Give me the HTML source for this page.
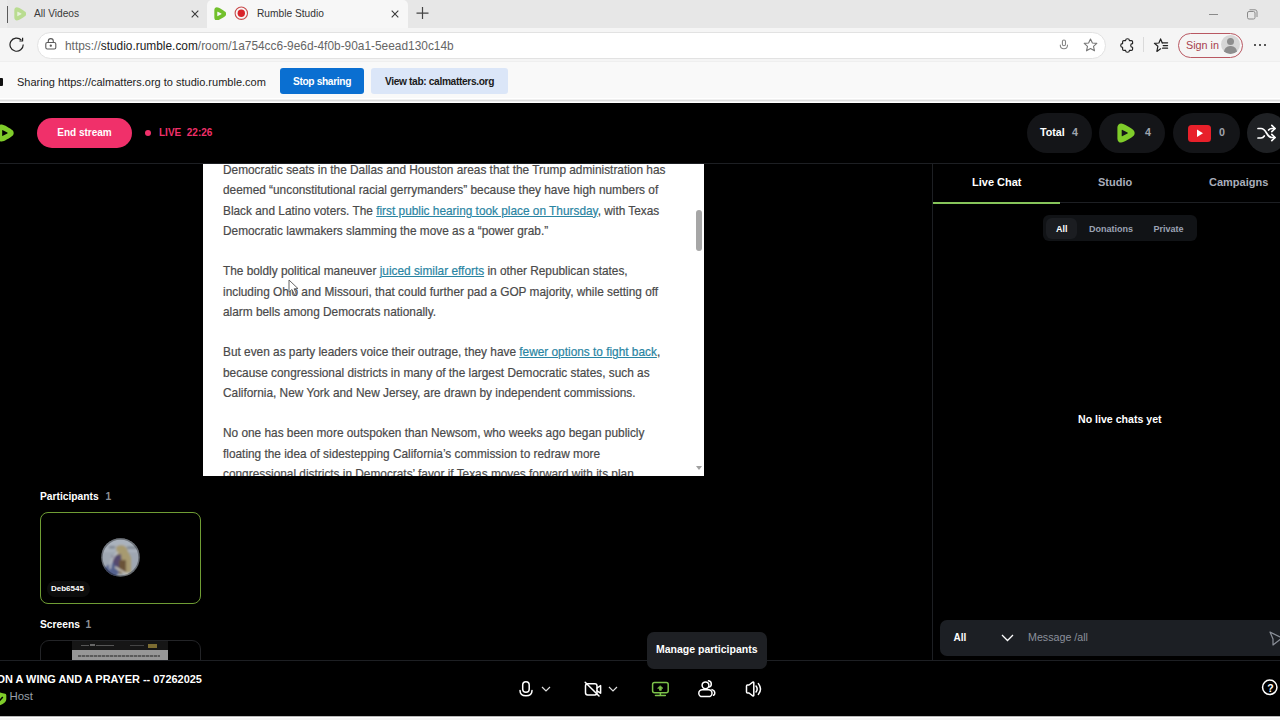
<!DOCTYPE html>
<html><head><meta charset="utf-8">
<style>
*{margin:0;padding:0;box-sizing:border-box}
html,body{width:1280px;height:720px;overflow:hidden;background:#000;font-family:"Liberation Sans",sans-serif}
.abs{position:absolute}
#tabs{position:absolute;left:0;top:0;width:1280px;height:28px;background:#e7e7e7}
#toolbar{position:absolute;left:0;top:28px;width:1280px;height:34px;background:#f5f5f5}
#share{position:absolute;left:0;top:61px;width:1280px;height:42px;background:linear-gradient(#efefef 0 1px,#f9f9f9 1px 37px,#fff 37px 38px,#f0f0f0 38px 39px,#dcdcdc 39px 40px,#f0f0f0 40px 41px,#fff 41px)}
#sep1{display:none}
#app{position:absolute;left:0;top:103px;width:1280px;height:613px;background:#000;overflow:hidden}
#bottomframe{position:absolute;left:0;top:716px;width:1280px;height:4px;background:#f0f0f0}
.t{position:absolute;white-space:nowrap}
</style></head><body>
<!-- tabs -->
<div id="tabs">
  <div class="abs" style="left:0;top:0;width:7px;height:28px;background:#ebebeb"></div>
  <div class="abs" style="left:7px;top:6px;width:1.3px;height:17px;background:#5a5a5a"></div>
  <svg class="abs" style="left:13.5px;top:6.8px" width="12.5" height="13.8" viewBox="0 0 18 20"><path d="M4.2 0.4 C1.8 0.4 0.4 2 0.4 4.6 L0.4 15.4 C0.4 18 1.8 19.6 4.2 19.6 C6.8 19.6 13.8 15.2 16.3 13.1 C18.1 11.6 18.1 8.4 16.3 6.9 C13.8 4.8 6.8 0.4 4.2 0.4 Z" fill="#b9dc90"/><path d="M5.5 6.9 Q4.7 6.4 4.7 7.3 L4.7 12.7 Q4.7 13.6 5.5 13.1 L10.5 10.5 Q11.3 10 10.5 9.5 Z" fill="#e6f1da"/></svg>
  <div class="t" style="left:34px;top:8px;font-size:10.2px;color:#3a3a3a">All Videos</div>
  <svg class="abs" style="left:191px;top:10px" width="8" height="8" stroke="#3a3a3a" stroke-width="1.1"><path d="M0.7 0.7 L7.3 7.3 M7.3 0.7 L0.7 7.3"/></svg>
  <div class="abs" style="left:207px;top:0;width:201px;height:28px;background:#f7f7f7;border-radius:5px 5px 0 0"></div>
  <svg class="abs" style="left:213.5px;top:6.6px" width="12.5" height="13.8" viewBox="0 0 18 20"><path d="M4.2 0.4 C1.8 0.4 0.4 2 0.4 4.6 L0.4 15.4 C0.4 18 1.8 19.6 4.2 19.6 C6.8 19.6 13.8 15.2 16.3 13.1 C18.1 11.6 18.1 8.4 16.3 6.9 C13.8 4.8 6.8 0.4 4.2 0.4 Z" fill="#72c02c"/><path d="M5.5 6.9 Q4.7 6.4 4.7 7.3 L4.7 12.7 Q4.7 13.6 5.5 13.1 L10.5 10.5 Q11.3 10 10.5 9.5 Z" fill="#f7f7f7"/></svg>
  <svg class="abs" style="left:234px;top:6px" width="15" height="15"><circle cx="7.3" cy="7.2" r="6.2" fill="none" stroke="#c84a4a" stroke-width="1.1"/><circle cx="7.3" cy="7.2" r="3.7" fill="#d9232a"/></svg>
  <div class="t" style="left:257px;top:8px;font-size:10.2px;color:#333">Rumble Studio</div>
  <svg class="abs" style="left:391px;top:10px" width="8" height="8" stroke="#3a3a3a" stroke-width="1.1"><path d="M0.7 0.7 L7.3 7.3 M7.3 0.7 L0.7 7.3"/></svg>
  <svg class="abs" style="left:416px;top:7px" width="13" height="13" stroke="#444" stroke-width="1.2"><path d="M6.5 0 V12 M0.5 6.2 H12.5"/></svg>
  <div class="abs" style="left:1209px;top:14px;width:9px;height:1px;background:#8a8a8a"></div>
  <svg class="abs" style="left:1247px;top:9px" width="11" height="11" fill="none" stroke="#8a8a8a" stroke-width="1"><rect x="0.5" y="2.5" width="7.5" height="7.5" rx="1.5"/><path d="M2.5 0.8 H8 Q10 0.8 10 2.8 V8"/></svg>
</div>
<div id="toolbar">
  <svg class="abs" style="left:9px;top:9px" width="16" height="16" fill="none" stroke="#222" stroke-width="1.2"><path d="M14.2 7.5 A6.6 6.6 0 1 1 12.3 3"/><path d="M13.6 0.8 V4 H10.4" stroke-linejoin="round"/></svg>
  <div class="abs" style="left:37px;top:4px;width:1069px;height:27px;background:#fff;border:1px solid #e2e2e2;border-radius:13.5px"></div>
  <svg class="abs" style="left:45px;top:10px" width="12" height="12" fill="none" stroke="#5a5a5a" stroke-width="1.1"><rect x="0.8" y="4.5" width="10" height="6.5" rx="1.5"/><path d="M3.3 4.5 V3 Q3.3 0.6 5.8 0.6 Q8.3 0.6 8.3 3 V4.5"/><circle cx="5.8" cy="7.7" r="0.6" fill="#5a5a5a"/></svg>
  <div class="t" style="left:65px;top:11px;font-size:11.9px;color:#666">https://<span style="color:#222">studio.rumble.com</span>/room/1a754cc6-9e6d-4f0b-90a1-5eead130c14b</div>
  <svg class="abs" style="left:1059px;top:11px" width="10" height="11" fill="none" stroke="#858585" stroke-width="1.1" stroke-linecap="round"><rect x="3.4" y="1" width="3.1" height="5.8" rx="1.55"/><path d="M1.3 6 Q1.3 9.8 4.95 9.8 Q8.5 9.8 8.5 6"/></svg>
  <svg class="abs" style="left:1083px;top:10px" width="15" height="14" fill="none" stroke="#777" stroke-width="1.1" stroke-linejoin="round"><path d="M7.5 1 L9.4 5 L13.8 5.4 L10.5 8.4 L11.5 12.8 L7.5 10.5 L3.5 12.8 L4.5 8.4 L1.2 5.4 L5.6 5 Z"/></svg>
  <svg class="abs" style="left:1119.9px;top:9.5px" width="15" height="16" fill="none" stroke="#222" stroke-width="1.15" stroke-linejoin="round"><path d="M5.6 2.6 A1.9 1.9 0 0 1 9.4 2.6 L11.4 2.6 Q12.6 2.6 12.6 3.8 L12.6 5.6 A1.9 1.9 0 0 0 12.6 9.4 L12.6 11.2 Q12.6 12.4 11.4 12.4 L9.4 12.4 A1.9 1.9 0 0 1 5.6 12.4 L3.8 12.4 Q2.6 12.4 2.6 11.2 L2.6 9.4 A1.9 1.9 0 0 1 2.6 5.6 L2.6 3.8 Q2.6 2.6 3.8 2.6 Z"/></svg>
  <div class="abs" style="left:1143px;top:9px;width:1px;height:15px;background:#dadada"></div>
  <svg class="abs" style="left:1153px;top:9px" width="17" height="17" fill="none" stroke="#222" stroke-width="1.2" stroke-linejoin="round" stroke-linecap="round"><path d="M9.3 6 L7.6 1.9 L5.9 6 L1.4 6.3 L4.9 9.2 L3.9 14.4 L7.6 11.8"/><path d="M9.3 5.8 H14.6 M10.2 8.6 H14.6 M9.6 11.2 H14.6"/></svg>
  <div class="abs" style="left:1178px;top:4.5px;width:65px;height:25px;border:1px solid #b95862;border-radius:12.5px"></div>
  <div class="t" style="left:1186px;top:10.5px;font-size:10.8px;color:#a8424f">Sign in</div>
  <div class="abs" style="left:1221px;top:7px;width:19px;height:19px;border-radius:50%;background:#d6d6d6;overflow:hidden">
    <div class="abs" style="left:6px;top:3px;width:7px;height:7px;border-radius:50%;background:#8d8d8d"></div>
    <div class="abs" style="left:3px;top:11px;width:13px;height:10px;border-radius:6px 6px 0 0;background:#8d8d8d"></div>
  </div>
  <div class="abs" style="left:1254px;top:16px;width:2px;height:2px;background:#222;border-radius:1px"></div>
  <div class="abs" style="left:1259px;top:16px;width:2px;height:2px;background:#222;border-radius:1px"></div>
  <div class="abs" style="left:1264px;top:16px;width:2px;height:2px;background:#222;border-radius:1px"></div>
</div>
<div id="share">
  <div class="abs" style="left:0;top:17.0px;width:3px;height:8px;background:#111;border-radius:0 1px 1px 0"></div>
  <div class="t" style="left:17px;top:15.3px;font-size:11px;color:#222">Sharing https://calmatters.org to studio.rumble.com</div>
  <div class="abs" style="left:280px;top:7.0px;width:84px;height:26px;background:#0a6fd1;border-radius:3px"></div>
  <div class="t" style="left:280px;top:14.5px;width:84px;text-align:center;font-size:10.2px;letter-spacing:-0.35px;font-weight:bold;color:#fff">Stop sharing</div>
  <div class="abs" style="left:371px;top:7.0px;width:137px;height:26px;background:#dbe6f8;border-radius:3px"></div>
  <div class="t" style="left:371px;top:14.5px;width:137px;text-align:center;font-size:10.2px;letter-spacing:-0.35px;font-weight:bold;color:#1a1a1a">View tab: calmatters.org</div>
</div>
<div id="sep1"></div>
<div id="app"></div>
<!-- top bar of studio -->
<div class="abs" style="left:0;top:163px;width:1280px;height:1px;background:#1d1f23"></div>
<svg class="abs" style="left:-2px;top:124px" width="16" height="18" viewBox="0 0 18 20"><path d="M4.2 0.4 C1.8 0.4 0.4 2 0.4 4.6 L0.4 15.4 C0.4 18 1.8 19.6 4.2 19.6 C6.8 19.6 13.8 15.2 16.3 13.1 C18.1 11.6 18.1 8.4 16.3 6.9 C13.8 4.8 6.8 0.4 4.2 0.4 Z" fill="#7fcc2a"/><path d="M5.5 6.9 Q4.7 6.4 4.7 7.3 L4.7 12.7 Q4.7 13.6 5.5 13.1 L10.5 10.5 Q11.3 10 10.5 9.5 Z" fill="#000"/></svg>
<div class="abs" style="left:37px;top:118px;width:95px;height:30px;background:#f0306a;border-radius:15px"></div>
<div class="t" style="left:37px;top:127px;width:95px;text-align:center;font-size:10px;font-weight:bold;color:#fff">End stream</div>
<div class="abs" style="left:145px;top:130px;width:6px;height:6px;border-radius:50%;background:#f0306a"></div>
<div class="t" style="left:159px;top:127px;font-size:10px;font-weight:bold;color:#f0306a">LIVE&nbsp;&nbsp;22:26</div>
<div class="abs" style="left:1027px;top:113px;width:64.5px;height:40px;background:#141518;border-radius:20px"></div>
<div class="t" style="left:1040px;top:126.2px;font-size:10.7px;font-weight:bold;color:#fff">Total</div>
<div class="t" style="left:1072px;top:126.2px;font-size:10.7px;font-weight:bold;color:#a0a4ad">4</div>
<div class="abs" style="left:1099px;top:113px;width:66px;height:40px;background:#141518;border-radius:20px"></div>
<svg class="abs" style="left:1117px;top:123px" width="18" height="20" viewBox="0 0 18 20"><path d="M4.2 0.4 C1.8 0.4 0.4 2 0.4 4.6 L0.4 15.4 C0.4 18 1.8 19.6 4.2 19.6 C6.8 19.6 13.8 15.2 16.3 13.1 C18.1 11.6 18.1 8.4 16.3 6.9 C13.8 4.8 6.8 0.4 4.2 0.4 Z" fill="#7fcc2a"/><path d="M5.5 6.9 Q4.7 6.4 4.7 7.3 L4.7 12.7 Q4.7 13.6 5.5 13.1 L10.5 10.5 Q11.3 10 10.5 9.5 Z" fill="#141518"/></svg>
<div class="t" style="left:1145px;top:126.2px;font-size:10.7px;font-weight:bold;color:#a0a4ad">4</div>
<div class="abs" style="left:1173px;top:113px;width:66.5px;height:40px;background:#141518;border-radius:20px"></div>
<div class="abs" style="left:1188px;top:125px;width:23px;height:17px;background:#e8202a;border-radius:3.5px"></div>
<svg class="abs" style="left:1188px;top:125px" width="23" height="17"><path d="M9 4.5 L15 8.3 L9 12 Z" fill="#fff"/></svg>
<div class="t" style="left:1219px;top:126.2px;font-size:10.7px;font-weight:bold;color:#a0a4ad">0</div>
<div class="abs" style="left:1247px;top:113px;width:40px;height:40px;background:#1f2124;border-radius:20px"></div>
<svg class="abs" style="left:1256px;top:122px" width="22" height="22" viewBox="0 0 22 22" fill="none" stroke="#fff" stroke-width="1.7" stroke-linecap="round" stroke-linejoin="round"><path d="M2 6.5 H5 Q8 6.5 10.5 11 Q13 15.5 16 15.5 H19"/><path d="M2 16 H5 Q7 16 8.3 14"/><path d="M12.6 8 Q13.8 6.5 16 6.5 H19"/><path d="M15.8 3.3 L19 6.5 L15.8 9.7"/><path d="M15.8 12.3 L19 15.5 L15.8 18.7"/></svg>

<!-- article panel -->
<div class="abs" style="left:203px;top:164px;width:501px;height:312px;background:#fff;overflow:hidden">
  <div class="abs" style="left:20px;top:-3.9px;width:470px;font-size:11.85px;line-height:20.25px;color:#4a4a4a;-webkit-text-stroke:0.2px #4a4a4a;white-space:nowrap">
    Democratic seats in the Dallas and Houston areas that the Trump administration has<br>
    deemed “unconstitutional racial gerrymanders” because they have high numbers of<br>
    Black and Latino voters. The <u style="color:#2a85a3;-webkit-text-stroke-color:#2a85a3">first public hearing took place on Thursday</u>, with Texas<br>
    Democratic lawmakers slamming the move as a “power grab.”<br><br>
    The boldly political maneuver <u style="color:#2a85a3;-webkit-text-stroke-color:#2a85a3">juiced similar efforts</u> in other Republican states,<br>
    including Ohio and Missouri, that could further pad a GOP majority, while setting off<br>
    alarm bells among Democrats nationally.<br><br>
    But even as party leaders voice their outrage, they have <u style="color:#2a85a3;-webkit-text-stroke-color:#2a85a3">fewer options to fight back</u>,<br>
    because congressional districts in many of the largest Democratic states, such as<br>
    California, New York and New Jersey, are drawn by independent commissions.<br><br>
    No one has been more outspoken than Newsom, who weeks ago began publicly<br>
    floating the idea of sidestepping California’s commission to redraw more<br>
    congressional districts in Democrats’ favor if Texas moves forward with its plan
  </div>
  <div class="abs" style="left:493px;top:46px;width:6px;height:41px;background:#a6a6a6;border-radius:3px"></div>
  <svg class="abs" style="left:492px;top:301px" width="8" height="6"><path d="M1 1 L7 1 L4 5 Z" fill="#a0a0a0"/></svg>
</div>
<svg class="abs" style="left:288px;top:279px" width="12" height="17" fill="#fff" stroke="#555" stroke-width="0.9"><path d="M1 1 L1 13 L4 10.5 L6.3 15.5 L8.3 14.6 L6.1 9.8 L10 9.6 Z"/></svg>

<!-- participants -->
<div class="t" style="left:40px;top:490.5px;font-size:10.25px;font-weight:bold;color:#fff">Participants</div>
<div class="t" style="left:105.5px;top:490.5px;font-size:10.25px;font-weight:bold;color:#8c8f96">1</div>
<div class="abs" style="left:40px;top:512px;width:161px;height:92px;border:1px solid #6f9d34;border-radius:8px;background:#000"></div>
<svg class="abs" style="left:101px;top:538px" width="39" height="39" viewBox="0 0 39 39">
  <defs><clipPath id="avc"><circle cx="19.5" cy="19.5" r="19.3"/></clipPath><filter id="avb" x="-20%" y="-20%" width="140%" height="140%"><feGaussianBlur stdDeviation="1.1"/></filter></defs>
  <g clip-path="url(#avc)">
  <rect width="39" height="39" fill="#9fa7b2"/>
  <g filter="url(#avb)">
  <rect x="0" y="0" width="39" height="14" fill="#aab2bd"/>
  <rect x="8" y="8" width="6" height="2.5" fill="#7d8490"/>
  <rect x="26" y="8.5" width="10" height="2.5" fill="#7d8490"/>
  <path d="M15 9 Q20 5 25 9 L30 20 L30 34 L18 36 Z" fill="#a79a70"/>
  <path d="M11 18 L20 16 L21 31 L12 31 Z" fill="#54496e"/>
  <path d="M18 22 L25 22 L25 35 L18 35 Z" fill="#6b5238"/>
  <path d="M3 30 L12 24 L18 34 L14 40 L3 40 Z" fill="#52608c"/>
  <path d="M17 14 Q10 20 9 31" fill="none" stroke="#c9ccd1" stroke-width="1.4"/>
  <path d="M14 29 L29 38" stroke="#cfcbbf" stroke-width="1.5"/>
  </g>
  </g>
  <circle cx="19.5" cy="19.5" r="18.8" fill="none" stroke="#000" stroke-opacity="0.35" stroke-width="2"/>
</svg>
<div class="abs" style="left:47px;top:581px;width:43px;height:16px;border-radius:8px;background:#0c0c0c"></div>
<div class="t" style="left:51px;top:584px;font-size:8px;font-weight:bold;color:#fff">Deb6545</div>
<div class="t" style="left:40px;top:618.5px;font-size:10.25px;font-weight:bold;color:#fff">Screens</div>
<div class="t" style="left:85.5px;top:618.5px;font-size:10.25px;font-weight:bold;color:#8c8f96">1</div>
<div class="abs" style="left:40px;top:640px;width:161px;height:40px;border:1px solid #232427;border-radius:9px;background:#000"></div>
<div class="abs" style="left:72px;top:641px;width:96px;height:9px;background:#161616"></div>
<div class="abs" style="left:81px;top:645px;width:8px;height:1px;background:#555"></div><div class="abs" style="left:90px;top:644px;width:5px;height:2px;background:#666"></div><div class="abs" style="left:96px;top:645px;width:18px;height:1px;background:#555"></div><div class="abs" style="left:130px;top:645px;width:14px;height:1px;background:#444"></div>
<div class="abs" style="left:148px;top:644px;width:9px;height:4px;background:#7d6d32"></div>
<div class="abs" style="left:72px;top:650px;width:96px;height:10px;background:#979797"></div>
<div class="abs" style="left:78px;top:655px;width:82px;height:2px;background:repeating-linear-gradient(90deg,#5a5a5a 0 3px,#808080 3px 4px)"></div>

<!-- right panel -->
<div class="abs" style="left:932px;top:164px;width:1px;height:496px;background:#1d1f23"></div>
<div class="abs" style="left:933px;top:202px;width:347px;height:1px;background:#1d1f23"></div>
<div class="abs" style="left:933px;top:202px;width:127px;height:2px;background:#86c45a"></div>
<div class="t" style="left:972px;top:175.5px;font-size:11px;font-weight:bold;color:#fff">Live Chat</div>
<div class="t" style="left:1098px;top:175.5px;font-size:11px;font-weight:bold;color:#a9aebb">Studio</div>
<div class="t" style="left:1209px;top:175.5px;font-size:11px;font-weight:bold;color:#a9aebb">Campaigns</div>
<div class="abs" style="left:1043px;top:215px;width:154px;height:26px;background:#111316;border-radius:6px"></div>
<div class="abs" style="left:1046px;top:218px;width:31px;height:21px;background:#1b1d21;border-radius:6px"></div>
<div class="t" style="left:1056px;top:223.5px;font-size:9px;font-weight:bold;color:#fff">All</div>
<div class="t" style="left:1089px;top:223.5px;font-size:9px;font-weight:bold;color:#9ca3b4">Donations</div>
<div class="t" style="left:1153.5px;top:223.5px;font-size:9px;font-weight:bold;color:#9ca3b4">Private</div>
<div class="t" style="left:1078px;top:413px;font-size:10.6px;font-weight:bold;color:#fff">No live chats yet</div>
<div class="abs" style="left:940px;top:620px;width:350px;height:36px;background:#1c1f24;border-radius:7px"></div>
<div class="t" style="left:953.5px;top:632px;font-size:10px;font-weight:bold;color:#fff">All</div>
<svg class="abs" style="left:1001px;top:634px" width="13" height="8" fill="none" stroke="#fff" stroke-width="1.3"><path d="M1 1 L6.5 6.5 L12 1"/></svg>
<div class="t" style="left:1028px;top:631px;font-size:10.7px;color:#8b909b">Message /all</div>
<svg class="abs" style="left:1268px;top:630px" width="14" height="17" fill="none" stroke="#8a8f98" stroke-width="1.2" stroke-linejoin="round"><path d="M2 2 L14 8 L5 15 L5 9 Z"/></svg>

<!-- bottom bar -->
<div class="abs" style="left:0;top:660px;width:1280px;height:56px;background:#000"></div>
<div class="abs" style="left:0;top:660px;width:1280px;height:1px;background:#1d1f23"></div>
<div class="t" style="left:-3.5px;top:672.5px;font-size:10.95px;font-weight:bold;color:#fff">ON A WING AND A PRAYER -- 07262025</div>
<svg class="abs" style="left:-6px;top:691.5px" width="13" height="14"><path d="M6 0.5 Q9 1.2 11.2 1.8 Q12.3 2.2 12.3 3.4 V7 Q12.3 11 6 13.2 Q-0.3 11 -0.3 7 V3.4 Q-0.3 2.2 0.8 1.8 Q3 1.2 6 0.5 Z" fill="#7fcc2a"/><path d="M3.3 6.8 L5.4 8.9 L8.8 5" fill="none" stroke="#000" stroke-width="1.5"/></svg>
<div class="t" style="left:9.5px;top:690px;font-size:11.4px;color:#9aa0aa">Host</div>
<div class="abs" style="left:647px;top:632px;width:120px;height:37px;background:#1e2024;border-radius:7px"></div>
<div class="t" style="left:656px;top:642.8px;font-size:10.5px;font-weight:bold;color:#fff">Manage participants</div>
<!-- controls -->
<svg class="abs" style="left:518px;top:680px" width="16" height="18" fill="none" stroke="#fff" stroke-width="1.5" stroke-linecap="round"><rect x="4.7" y="1.8" width="6.5" height="10.5" rx="3.25"/><path d="M2 10.5 Q2 15.8 8 15.8 Q14 15.8 14 10.5"/></svg>
<svg class="abs" style="left:541px;top:686px" width="10" height="7" fill="none" stroke="#ddd" stroke-width="1.2"><path d="M1 1 L5 5 L9 1"/></svg>
<svg class="abs" style="left:584px;top:681px" width="18" height="16" fill="none" stroke="#fff" stroke-width="1.5" stroke-linecap="round" stroke-linejoin="round"><rect x="1.5" y="2.8" width="11.5" height="11.2" rx="2.2"/><path d="M13 7 L16.6 4.6 V12.2 L13 9.8"/><path d="M1.2 1.2 L15 15"/></svg>
<svg class="abs" style="left:608px;top:686px" width="10" height="7" fill="none" stroke="#ddd" stroke-width="1.2"><path d="M1 1 L5 5 L9 1"/></svg>
<svg class="abs" style="left:651px;top:681px" width="19" height="16" fill="none" stroke="#7cc24a" stroke-width="1.5" stroke-linecap="round" stroke-linejoin="round"><rect x="1.6" y="1.5" width="15.6" height="10.2" rx="2"/><path d="M9.4 11.7 V14.5 M4.5 14.5 H14.3"/><path d="M9.4 5 L11.8 7.2 H10.3 V9.3 H8.5 V7.2 H7 Z" fill="#7cc24a" stroke-width="0.8"/></svg>
<svg class="abs" style="left:697px;top:679px" width="20" height="19" fill="none" stroke="#fff" stroke-width="1.5" stroke-linecap="round"><circle cx="8.5" cy="6.3" r="3.4"/><rect x="1.8" y="10.8" width="13.2" height="6.8" rx="3.4"/><path d="M11.5 1.8 Q14.3 2.2 14.3 5 Q14.3 7.5 12.2 8"/><path d="M15 10.6 Q17.8 11.5 17.8 14 Q17.8 15.8 16.5 16.3"/></svg>
<svg class="abs" style="left:745px;top:681px" width="18" height="16" fill="none" stroke="#fff" stroke-width="1.5" stroke-linecap="round" stroke-linejoin="round"><path d="M1.5 5 Q1.5 4 2.5 4 H4 L7.8 1.2 Q8.8 0.6 8.8 1.8 V14.2 Q8.8 15.4 7.8 14.8 L4 12 H2.5 Q1.5 12 1.5 11 Z"/><path d="M11 5 Q13.4 8 11 11"/><path d="M13.4 2.6 Q17.6 8 13.4 13.4"/></svg>
<svg class="abs" style="left:1261px;top:679px" width="18" height="18" fill="none" stroke="#fff" stroke-width="1.5"><circle cx="8.75" cy="8.3" r="7.2"/></svg>
<div class="t" style="left:1261.5px;top:681.5px;width:18px;text-align:center;font-size:10.5px;font-weight:bold;color:#fff">?</div>
<div id="bottomframe" style="background:linear-gradient(#b8b8b8 0 1px,#fff 1px 2px,#f4f4f4 2px)"></div>
</body></html>
